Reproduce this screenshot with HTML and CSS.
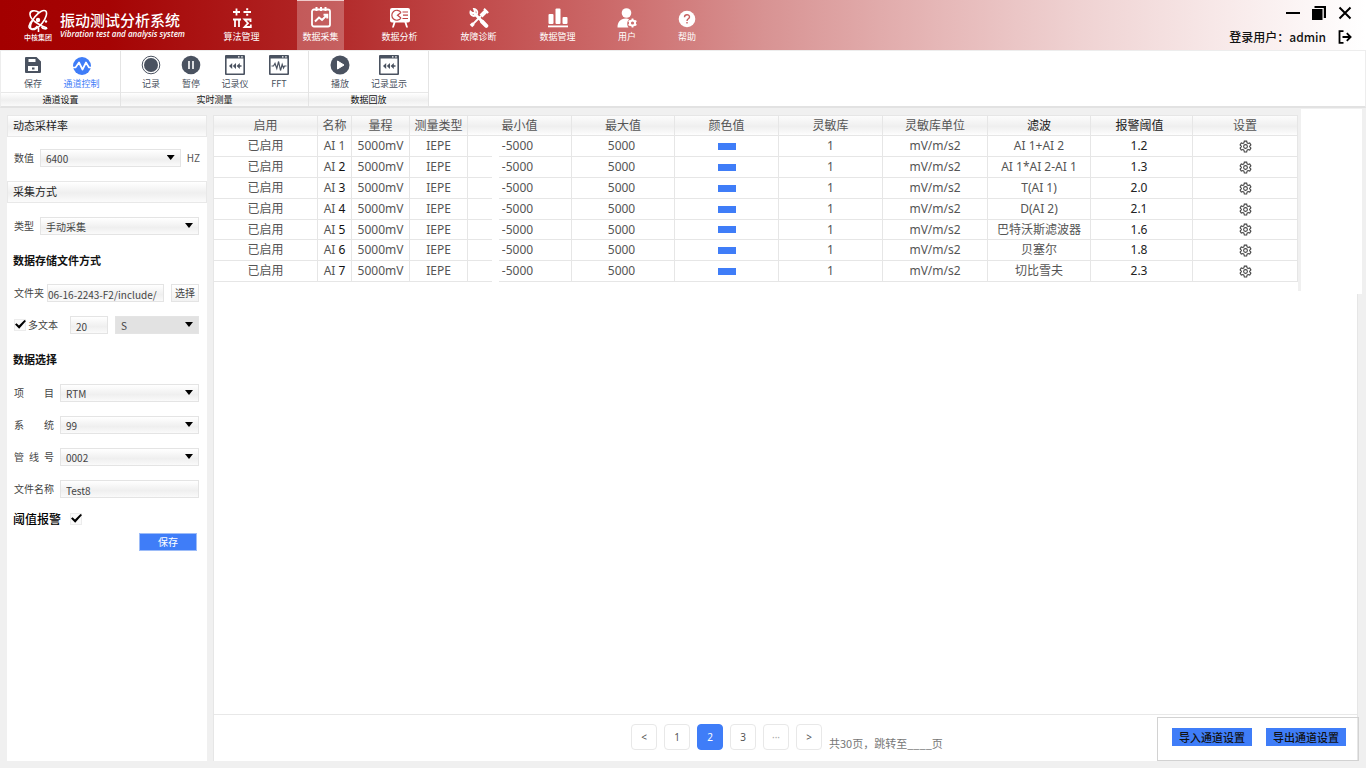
FILE: index.html
```html
<!DOCTYPE html>
<html lang="zh-CN">
<head>
<meta charset="utf-8">
<title>振动测试分析系统</title>
<link rel="stylesheet" href="styles.css">
</head>
<body>
<svg class="sprite" aria-hidden="true">
  <symbol id="gear" viewBox="0 0 24 24">
    <path d="M9.800 2h4.400l.7 3.200 1.900 1.100 3-.9 2.200 3.800-2.300 2.100v1.400l2.300 2.100-2.200 3.800-3-.9-1.900 1.100-.7 3.200H9.800l-.7-3.200-1.900-1.100-3 .9L2 14.800l2.300-2.100v-1.400L2 9.200l2.200-3.800 3 .9 1.900-1.100z" fill="none" stroke="currentColor" stroke-width="2"/>
    <circle cx="12" cy="12" r="3.500" fill="none" stroke="currentColor" stroke-width="2"/>
  </symbol>
  <symbol id="recorder" viewBox="0 0 20 20">
    <path fill="currentColor" fill-rule="evenodd" d="M1 0h18a1 1 0 0 1 1 1v18a1 1 0 0 1-1 1H1a1 1 0 0 1-1-1V1a1 1 0 0 1 1-1zM1.600 3.600v14.800h16.800V3.600zM13 1.300v1.300h1.500V1.300zM16.200 1.300v1.300h1.500V1.300z"/>
    <path fill="currentColor" d="M4 11l3.200-3v6zM7.800 11L11 8v6zM11.600 11l3.200-3v6zM14.500 10.300h2v1.400h-2z"/>
  </symbol>
</svg>

<header class="topbar">
  <div class="brand">
    <div class="logo">
      <svg width="22" height="24" viewBox="0 0 22 24" fill="none" stroke="#fff" stroke-width="1.600">
        <ellipse cx="11.500" cy="11" rx="11.500" ry="4.800" transform="rotate(-52 11.500 11)"/>
        <path d="M12 3.500C8 0.500 2.500 1.500 3 5.500c.5 5 8 10.500 17 13.500M10.500 17c-3 4.500-9 3.500-8.500 0 .3-2 2-4.500 4-6M11.500 18.500v4.500M14.500 18c1.500 2 5 2.500 5.500 1"/>
        <circle cx="11" cy="11" r="2.200" fill="#fff" stroke="none"/>
        <circle cx="19" cy="12.500" r="1.200" fill="#fff" stroke="none"/>
      </svg>
      <span class="logo-name">中核集团</span>
    </div>
    <div class="titles">
      <h1>振动测试分析系统</h1>
      <p>Vibration test and analysis system</p>
    </div>
  </div>

  <nav class="mainnav">
    <a href="#" class="nav-item">
      <svg width="20" height="20" viewBox="0 0 20 20" fill="none" stroke="#fff" stroke-width="1.800">
        <path d="M4.500 0.500v7M1 4h7M11.500 4h7.500M1 11.500h8M3 11.500v7.500M7 11.500v7.500M18.500 14v-2.500h-6l3.500 3.700-3.500 3.800h6.300v-2.500"/>
        <path d="M15.200 0.300v2M15.200 5.700v2" stroke-width="2"/>
      </svg>
      <span>算法管理</span>
    </a>
    <a href="#" class="nav-item active">
      <svg width="20" height="22" viewBox="0 0 20 22" fill="none" stroke="#fff" stroke-width="1.800">
        <rect x="1" y="3.500" width="18" height="17" rx="2"/>
        <path d="M5.500 1v4M10 1v4M14.500 1v4M4 15.500l4-4 3 2.500 5-5M12.500 8.700h3.800v3.800" stroke-width="2"/>
      </svg>
      <span>数据采集</span>
    </a>
    <a href="#" class="nav-item">
      <svg width="22" height="20" viewBox="0 0 22 20">
        <path fill="#fff" d="M3 0h16a2 2 0 0 1 2 2v10.500a2 2 0 0 1-2 2h-1.500l1.500 5h-1.800l-1.700-5h-9l-1.700 5H3l1.500-5H3a2 2 0 0 1-2-2V2a2 2 0 0 1 2-2z"/>
        <path d="M12 4.500a5 5 0 1 0 0 5.500M12 4.500L8.500 7.200 12 10M13.500 4h5.500M14 7.200h5M13.500 10.500h5.500" fill="none" stroke="#bf4545" stroke-width="1.200"/>
      </svg>
      <span>数据分析</span>
    </a>
    <a href="#" class="nav-item">
      <svg width="20" height="20" viewBox="0 0 20 20" fill="none" stroke="#fff">
        <path d="M12 8l5.500-5.500" stroke-width="4"/>
        <path d="M15 0.800l4.200 4.200" stroke-width="2"/>
        <path d="M12 8L3 17" stroke-width="1.800"/>
        <path d="M4.500 15.500L2 18" stroke-width="3.500"/>
        <path d="M6 6l11 11.500" stroke-width="2.800" stroke-linecap="round"/>
        <path d="M1.500 3.500a3.500 3.500 0 1 0 3.500-2.500l1 3-2 1.500z" stroke-width="1.800"/>
        <path d="M13 13.500l4.300 4.300" stroke-width="4" stroke-linecap="round"/>
      </svg>
      <span>故障诊断</span>
    </a>
    <a href="#" class="nav-item">
      <svg width="20" height="20" viewBox="0 0 20 20" fill="#fff">
        <rect x="0.500" y="6" width="5" height="10" rx="1"/><rect x="7.500" y="0.500" width="5" height="15.500" rx="1"/><rect x="14.500" y="9" width="5" height="7" rx="1"/><rect y="17.500" width="20" height="1.800"/>
      </svg>
      <span>数据管理</span>
    </a>
    <a href="#" class="nav-item short">
      <svg width="20" height="20" viewBox="0 0 20 20">
        <circle cx="9.500" cy="5" r="4.800" fill="#fff"/>
        <path fill="#fff" d="M0.500 19.500c0-5.500 3-9 8-9 1.500 0 3 .3 3.500 1-2 1.500-2.500 5.500-.5 8z"/>
        <circle cx="15.500" cy="15" r="2.600" fill="none" stroke="#fff" stroke-width="2"/>
        <path d="M15.500 10.500v2M15.500 17.500v2M11.600 12.800l1.700 1M17.700 16.200l1.700 1M11.600 17.200l1.700-1M17.700 13.800l1.700-1" stroke="#fff" stroke-width="1.800"/>
      </svg>
      <span>用户</span>
    </a>
    <a href="#" class="nav-item short">
      <svg width="18" height="18" viewBox="0 0 18 18">
        <circle cx="9" cy="9" r="8.300" fill="#fff"/>
        <path d="M6.500 7.300C6.500 4 11.500 4 11.500 7c0 1.800-2.500 1.800-2.500 4M9 12v1.600" fill="none" stroke="#c76060" stroke-width="1.400"/>
      </svg>
      <span>帮助</span>
    </a>
  </nav>

  <div class="session">
    <div class="window-buttons">
      <button type="button" aria-label="最小化"><svg width="14" height="14" viewBox="0 0 14 14"><path d="M0 7h14" stroke="#000" stroke-width="2"/></svg></button>
      <button type="button" aria-label="还原"><svg width="14" height="14" viewBox="0 0 14 14"><path d="M0 3h10.500v11H0zM2.500 0H14v12h-2.200V2H2.500z"/></svg></button>
      <button type="button" aria-label="关闭"><svg width="14" height="14" viewBox="0 0 14 14"><path d="M1.500 1.500l11 11M12.500 1.500l-11 11" stroke="#000" stroke-width="2"/></svg></button>
    </div>
    <div class="login">
      <span>登录用户：admin</span>
      <button type="button" aria-label="退出"><svg width="14" height="14" viewBox="0 0 14 14" fill="none" stroke="#000" stroke-width="1.800"><path d="M5.500 1.200H1.500v11.600h4M4.500 7h8M8.800 3.200L12.600 7l-3.800 3.800"/></svg></button>
    </div>
  </div>
</header>

<div class="toolbar">
  <section class="tool-group channel">
    <div class="tools">
      <button type="button" class="tool">
        <svg width="18" height="20" viewBox="0 0 18 20"><path fill="currentColor" fill-rule="evenodd" d="M2 2h10.500L17 6.500V17a1 1 0 0 1-1 1H2a1 1 0 0 1-1-1V3a1 1 0 0 1 1-1zM4.500 4v3h7V4zM4 11v5h10v-5zM8 12.500v2h2.500v-2z"/></svg>
        <span>保存</span>
      </button>
      <button type="button" class="tool wide current">
        <svg width="20" height="20" viewBox="0 0 20 20"><circle cx="10" cy="11" r="9" fill="currentColor"/><path d="M1 12.500h2.500L7 7.500l3.500 7 3.500-7 3 5H19" fill="none" stroke="#fff" stroke-width="1.700" stroke-linejoin="round"/></svg>
        <span>通道控制</span>
      </button>
    </div>
    <h2>通道设置</h2>
  </section>
  <section class="tool-group measure">
    <div class="tools">
      <button type="button" class="tool">
        <svg width="20" height="20" viewBox="0 0 20 20"><circle cx="10" cy="10" r="8.800" fill="none" stroke="currentColor"/><circle cx="10" cy="10" r="7" fill="currentColor"/></svg>
        <span>记录</span>
      </button>
      <button type="button" class="tool narrow">
        <svg width="20" height="20" viewBox="0 0 20 20"><circle cx="10" cy="10" r="9.300" fill="currentColor"/><path d="M8 6v8M12 6v8" stroke="#fff" stroke-width="1.600"/></svg>
        <span>暂停</span>
      </button>
      <button type="button" class="tool roomy">
        <svg width="20" height="20"><use href="#recorder"/></svg>
        <span>记录仪</span>
      </button>
      <button type="button" class="tool narrow">
        <svg width="20" height="20" viewBox="0 0 20 20"><path fill="currentColor" fill-rule="evenodd" d="M1 0h18a1 1 0 0 1 1 1v18a1 1 0 0 1-1 1H1a1 1 0 0 1-1-1V1a1 1 0 0 1 1-1zM1.600 3.600v14.800h16.800V3.600zM13 1.300v1.300h1.500V1.300zM16.200 1.300v1.300h1.500V1.300z"/><path d="M2.500 11h2l1.500-2.500L7.800 13.500l1.800-7L11.500 15.500l1.700-6 1.300 3.500L15.500 11h2" fill="none" stroke="currentColor" stroke-width="1.200"/></svg>
        <span>FFT</span>
      </button>
    </div>
    <h2>实时测量</h2>
  </section>
  <section class="tool-group replay">
    <div class="tools">
      <button type="button" class="tool">
        <svg width="20" height="20" viewBox="0 0 20 20"><circle cx="10" cy="10" r="9.500" fill="currentColor"/><path d="M7.500 6v8l6.500-4z" fill="#fff" stroke="#fff" stroke-linejoin="round"/></svg>
        <span>播放</span>
      </button>
      <button type="button" class="tool wide">
        <svg width="20" height="20"><use href="#recorder"/></svg>
        <span>记录显示</span>
      </button>
    </div>
    <h2>数据回放</h2>
  </section>
</div>

<main class="workspace">
  <form class="sidebar">
    <h2 class="band">动态采样率</h2>
    <div class="row">
      <label for="rate">数值</label>
      <span class="select"><select id="rate"><option>6400</option></select></span>
      <span class="unit">HZ</span>
    </div>
    <h2 class="band">采集方式</h2>
    <div class="row">
      <label for="mode">类型</label>
      <span class="select"><select id="mode"><option>手动采集</option></select></span>
    </div>
    <h3>数据存储文件方式</h3>
    <div class="row files">
      <label for="folder">文件夹</label>
      <input id="folder" class="field folder" type="text" value="06-16-2243-F2/include/">
      <button type="button" class="pick">选择</button>
    </div>
    <div class="row multi">
      <label class="tick"><input type="checkbox" checked><span>多文本</span></label>
      <input class="field count" type="text" value="20" aria-label="数量">
      <span class="select grey"><select aria-label="单位"><option>S</option></select></span>
    </div>
    <h3>数据选择</h3>
    <div class="choices">
      <div class="row named"><label for="project"><span>项</span><span>目</span></label><span class="select"><select id="project"><option>RTM</option></select></span></div>
      <div class="row named"><label for="system"><span>系</span><span>统</span></label><span class="select"><select id="system"><option>99</option></select></span></div>
      <div class="row named"><label for="line"><span>管</span><span>线</span><span>号</span></label><span class="select"><select id="line"><option>0002</option></select></span></div>
      <div class="row named"><label for="file">文件名称</label><input id="file" class="field" type="text" value="Test8"></div>
    </div>
    <label class="tick alarm"><span>阈值报警</span><input type="checkbox" checked></label>
    <button type="button" class="save">保存</button>
  </form>

  <section class="content">
    <div class="table-area">
      <table>
        <colgroup><col class="c104"><col class="c34"><col class="c58"><col class="c58"><col class="c104"><col class="c103"><col class="c104"><col class="c104"><col class="c105"><col class="c103"><col class="c102"><col class="c105"></colgroup>
        <thead>
          <tr><th>启用</th><th>名称</th><th>量程</th><th>测量类型</th><th>最小值</th><th>最大值</th><th>颜色值</th><th>灵敏库</th><th>灵敏库单位</th><th class="strong">滤波</th><th class="strong alarm-col">报警阈值</th><th>设置</th></tr>
        </thead>
        <tbody>
          <tr><td>已启用</td><td>AI 1</td><td>5000mV</td><td>IEPE</td><td class="min">-5000</td><td class="max">5000</td><td><i class="swatch"></i></td><td>1</td><td>mV/m/s2</td><td>AI 1+AI 2</td><td class="strong alarm-col">1.2</td><td><button type="button" class="gear" aria-label="设置"><svg width="13" height="13"><use href="#gear"/></svg></button></td></tr>
          <tr><td>已启用</td><td>AI <b>2</b></td><td>5000mV</td><td>IEPE</td><td class="min">-5000</td><td class="max">5000</td><td><i class="swatch"></i></td><td>1</td><td>mV/m/s2</td><td>AI 1*AI 2-AI 1</td><td class="strong alarm-col">1.3</td><td><button type="button" class="gear" aria-label="设置"><svg width="13" height="13"><use href="#gear"/></svg></button></td></tr>
          <tr><td>已启用</td><td>AI <b>3</b></td><td>5000mV</td><td>IEPE</td><td class="min">-5000</td><td class="max">5000</td><td><i class="swatch"></i></td><td>1</td><td>mV/m/s2</td><td>T(AI 1)</td><td class="strong alarm-col">2.0</td><td><button type="button" class="gear" aria-label="设置"><svg width="13" height="13"><use href="#gear"/></svg></button></td></tr>
          <tr><td>已启用</td><td>AI <b>4</b></td><td>5000mV</td><td>IEPE</td><td class="min">-5000</td><td class="max">5000</td><td><i class="swatch"></i></td><td>1</td><td>mV/m/s2</td><td>D(AI 2)</td><td class="strong alarm-col">2.1</td><td><button type="button" class="gear" aria-label="设置"><svg width="13" height="13"><use href="#gear"/></svg></button></td></tr>
          <tr><td>已启用</td><td>AI <b>5</b></td><td>5000mV</td><td>IEPE</td><td class="min">-5000</td><td class="max">5000</td><td><i class="swatch"></i></td><td>1</td><td>mV/m/s2</td><td>巴特沃斯滤波器</td><td class="strong alarm-col">1.6</td><td><button type="button" class="gear" aria-label="设置"><svg width="13" height="13"><use href="#gear"/></svg></button></td></tr>
          <tr><td>已启用</td><td>AI <b>6</b></td><td>5000mV</td><td>IEPE</td><td class="min">-5000</td><td class="max">5000</td><td><i class="swatch"></i></td><td>1</td><td>mV/m/s2</td><td>贝塞尔</td><td class="strong alarm-col">1.8</td><td><button type="button" class="gear" aria-label="设置"><svg width="13" height="13"><use href="#gear"/></svg></button></td></tr>
          <tr><td>已启用</td><td>AI <b>7</b></td><td>5000mV</td><td>IEPE</td><td class="min">-5000</td><td class="max">5000</td><td><i class="swatch"></i></td><td>1</td><td>mV/m/s2</td><td>切比雪夫</td><td class="strong alarm-col">2.3</td><td><button type="button" class="gear" aria-label="设置"><svg width="13" height="13"><use href="#gear"/></svg></button></td></tr>
        </tbody>
      </table>
      <div class="rail"></div>
      <div class="blank"></div>
    </div>

    <footer class="pager-bar">
      <nav class="pager" aria-label="分页">
        <button type="button">&lt;</button>
        <button type="button">1</button>
        <button type="button" class="on">2</button>
        <button type="button">3</button>
        <button type="button" class="dots">···</button>
        <button type="button">&gt;</button>
        <span class="jump">共30页，跳转至____页</span>
      </nav>
      <div class="transfer">
        <button type="button">导入通道设置</button>
        <button type="button">导出通道设置</button>
      </div>
    </footer>
  </section>
</main>
</body>
</html>
```

FILE: styles.css
```css
* { box-sizing: border-box; }
body {
  margin: 0;
  height: 100vh;
  display: flex;
  flex-direction: column;
  background: #f0f0f0;
  color: #444;
  font: 10px/14px "Noto Sans CJK SC", sans-serif;
}
h1, h2, h3, p { margin: 0; font-weight: 400; }
button, input, select { font: inherit; color: inherit; margin: 0; padding: 0; border: 0; border-radius: 0; }
button { background: none; cursor: pointer; }
svg { display: block; }
a { color: inherit; text-decoration: none; }
.sprite { position: absolute; width: 0; height: 0; }

/* Top bar */
.topbar {
  display: flex;
  height: 50px;
  flex: none;
  color: #fff;
  background: linear-gradient(90deg, #a30000 0%, #a50404 8%, #b02525 23%, #c04848 34%, #cc6b6b 45%, #d89393 56%, #e5b5b5 68%, #efd2d2 79%, #f8eaea 90%, #fff 100%);
}
.brand { display: flex; width: 218px; padding-left: 24px; }
.logo { display: flex; flex-direction: column; align-items: center; width: 28px; padding-top: 9px; }
.logo-name { font-size: 7px; line-height: 8px; font-weight: 500; white-space: nowrap; }
.titles { padding: 11px 0 0 8px; white-space: nowrap; }
.titles h1 { font-size: 15px; line-height: 18px; font-weight: 500; }
.titles p { font: italic 600 8px/10px "Open Sans", sans-serif; }
.mainnav { display: flex; gap: 32px; }
.nav-item {
  display: flex;
  flex-direction: column;
  align-items: center;
  justify-content: flex-end;
  gap: 2px;
  width: 47px;
  padding-bottom: 6px;
  font-size: 9px;
}
.nav-item.short { width: 28px; }
.nav-item.active { background: rgba(255, 255, 255, .25); border-top: 1px solid #efcaca; }
.session {
  display: flex;
  flex-direction: column;
  align-items: flex-end;
  gap: 9px;
  margin-left: auto;
  padding: 6px 14px 0 0;
  color: #111;
}
.window-buttons { display: flex; gap: 12px; }
.login { display: flex; align-items: center; gap: 12px; font-size: 12px; line-height: 16px; font-weight: 500; }

/* Tool bar */
.toolbar {
  display: flex;
  height: 58px;
  flex: none;
  background: #fff;
  border: 1px solid #ededed;
  border-bottom: 2px solid #e2e2e2;
}
.tool-group { display: flex; flex-direction: column; border-right: 1px solid #e4e4e4; color: #4a5260; }
.channel { width: 120px; }
.measure { width: 188px; }
.replay { width: 120px; }
.tools { display: flex; flex: 1; padding-top: 4px; }
.channel .tools { padding-left: 11px; }
.measure .tools { padding-left: 9px; }
.replay .tools { padding-left: 10px; gap: 3px; }
.tool { display: flex; flex-direction: column; align-items: center; width: 42px; gap: 2px; font-size: 9px; }
.tool.narrow { width: 38px; }
.tool.roomy { width: 50px; }
.tool.wide { width: 50px; }
.channel .wide { width: 55px; }
.current { color: #3f7df8; }
.tool-group h2 {
  font-size: 9px;
  line-height: 13px;
  color: #111;
  text-align: center;
  border-top: 1px solid #e8e8e8;
  background: linear-gradient(#fff, #efefef 55%, #fafafa);
}

/* Workspace */
.workspace {
  flex: 1;
  min-height: 0;
  display: grid;
  grid-template-columns: 200px minmax(0, 1fr);
  gap: 6px;
  padding: 7px 8px 7px 7px;
}

/* Side form */
.sidebar { background: #fff; }
.band {
  height: 22px;
  padding-left: 5px;
  font-size: 11px;
  line-height: 18px;
  color: #222;
  border: 1px solid #e8e8e8;
  background: linear-gradient(#fff, #efefef 55%, #fbfbfb);
}
.row { display: flex; align-items: center; height: 18px; margin: 14px 8px 14px 7px; gap: 6px; }
.band:first-child + .row { margin-top: 12px; }
.row label { flex: none; }
.select { position: relative; flex: 1; min-width: 0; height: 18px; }
.select::after {
  content: "";
  position: absolute;
  right: 6px;
  top: 6px;
  width: 8px;
  height: 5px;
  background: #000;
  clip-path: polygon(0 0, 100% 0, 50% 100%);
  pointer-events: none;
}
select, .field {
  width: 100%;
  min-width: 0;
  height: 18px;
  padding: 2px 5px 0;
  border: 1px solid #e4e4e4;
  background: linear-gradient(#fff, #efefef 60%, #fafafa);
}
select { appearance: none; display: block; }
.grey select { background: #e2e2e2; }
.unit { flex: none; margin-right: -1px; color: #555; }
.sidebar h3 { padding-left: 6px; font-size: 11px; line-height: 16px; font-weight: 700; color: #111; }
.sidebar h3 + .row { margin-top: 16px; }
.row + h3 { margin-top: 17px; }
.files { gap: 3px; }
.files .folder { padding: 2px 0 0; flex: 1; }
.pick { width: 28px; height: 18px; margin-left: 4px; border: 1px solid #e4e4e4; background: linear-gradient(#fff, #f2f2f2); }
.multi { gap: 7px; margin-bottom: 0; }
.multi .tick { width: 49px; }
.multi .count { width: 38px; }
.tick { display: flex; align-items: center; gap: 2px; }
.tick input {
  appearance: none;
  width: 12px;
  height: 12px;
  border: 1px solid #ececec;
  background: #fafafa;
}
.tick input:checked::after {
  content: "";
  display: block;
  width: 11px;
  height: 9px;
  background: #000;
  clip-path: polygon(0 50%, 14% 36%, 36% 62%, 86% 0, 100% 12%, 38% 98%);
}
.choices { display: grid; gap: 14px; padding: 17px 8px 0 7px; }
.choices .named { margin: 0; }
.named label { display: flex; justify-content: space-between; width: 40px; white-space: nowrap; }
.alarm { width: max-content; margin: 12px 0 0 6px; gap: 9px; font-size: 12px; line-height: 18px; font-weight: 500; color: #000; }
.save { display: block; width: 58px; height: 18px; margin: 5px 10px 0 auto; color: #fff; background: #3f7df8; border: 1px solid #9dbcf8; }

/* Channel table */
.content { display: flex; flex-direction: column; min-width: 0; background: #fff; border-left: 1px solid #e6e6e6; border-right: 1px solid #e6e6e6; }
.table-area { display: flex; align-items: stretch; }
table {
  flex: 1;
  width: 100%;
  border-collapse: separate;
  border-spacing: 0;
  table-layout: fixed;
  font: 12px/16px "Noto Sans", "Noto Sans CJK SC", sans-serif;
  color: #555;
}
.c34 { width: 34px; }
.c58 { width: 58px; }
.c102 { width: 102px; }
.c103 { width: 103px; }
.c104 { width: 104px; }
.c105 { width: 105px; }
th, td { height: 21px; padding: 0; text-align: center; white-space: nowrap; border-right: 1px solid #e6e6e6; border-bottom: 1px solid #e6e6e6; }
th { height: 21px; padding-top: 1px; font-weight: 400; border-top: 1px solid #e6e6e6; background: linear-gradient(#fcfcfc, #efefef 55%, #fdfdfd); }
tbody tr:nth-child(3n+2) td { height: 20px; }
tbody tr:nth-child(2) td { height: 21px; }
td.min {
  padding: 0 4px 1px 0;
  border-bottom: 0;
  background: linear-gradient(90deg, #e6e6e6 24px, #fff 24px, #fff 31px, #e6e6e6 31px) bottom / 100% 1px no-repeat;
}
td.max { padding-right: 3px; }
td b { font-weight: 400; color: #111; }
.strong { color: #222; }
td.alarm-col { padding-right: 5px; }
th.alarm-col { padding-right: 4px; }
.swatch { display: block; width: 18px; height: 7px; margin: 0 auto; background: #3f7df8; }
.gear { display: block; margin: 0 auto; color: #444; }
.rail { width: 3px; margin: -3px 0 -9px; background: #f0f0f0; }
.blank { width: 61px; margin: -6px -5px -12px 0; background: #fff; }

/* Footer */
.pager-bar {
  display: grid;
  grid-template-columns: 1fr auto;
  height: 47px;
  margin-top: auto;
  border-top: 1px solid #e8e8e8;
}
.pager { display: flex; align-items: center; gap: 7px; padding-left: 417px; padding-bottom: 2px; }
.pager button { width: 26px; height: 26px; border: 1px solid #e8e8e8; border-radius: 4px; color: #555; font-family: "Noto Sans", sans-serif; }
.pager .on { color: #fff; background: #3f7df8; border-color: #3f7df8; }
.pager .dots { color: #aaa; }
.jump { padding-top: 12px; font-size: 11px; color: #777; white-space: nowrap; }
.transfer {
  display: flex;
  align-items: center;
  gap: 14px;
  margin: 2px -2px 0 0;
  padding: 0 12px 4px 14px;
  border: 1px solid #d2d2d2;
}
.transfer button { width: 80px; height: 18px; font-size: 11px; font-weight: 500; color: #111; background: #3f7df8; }
```
